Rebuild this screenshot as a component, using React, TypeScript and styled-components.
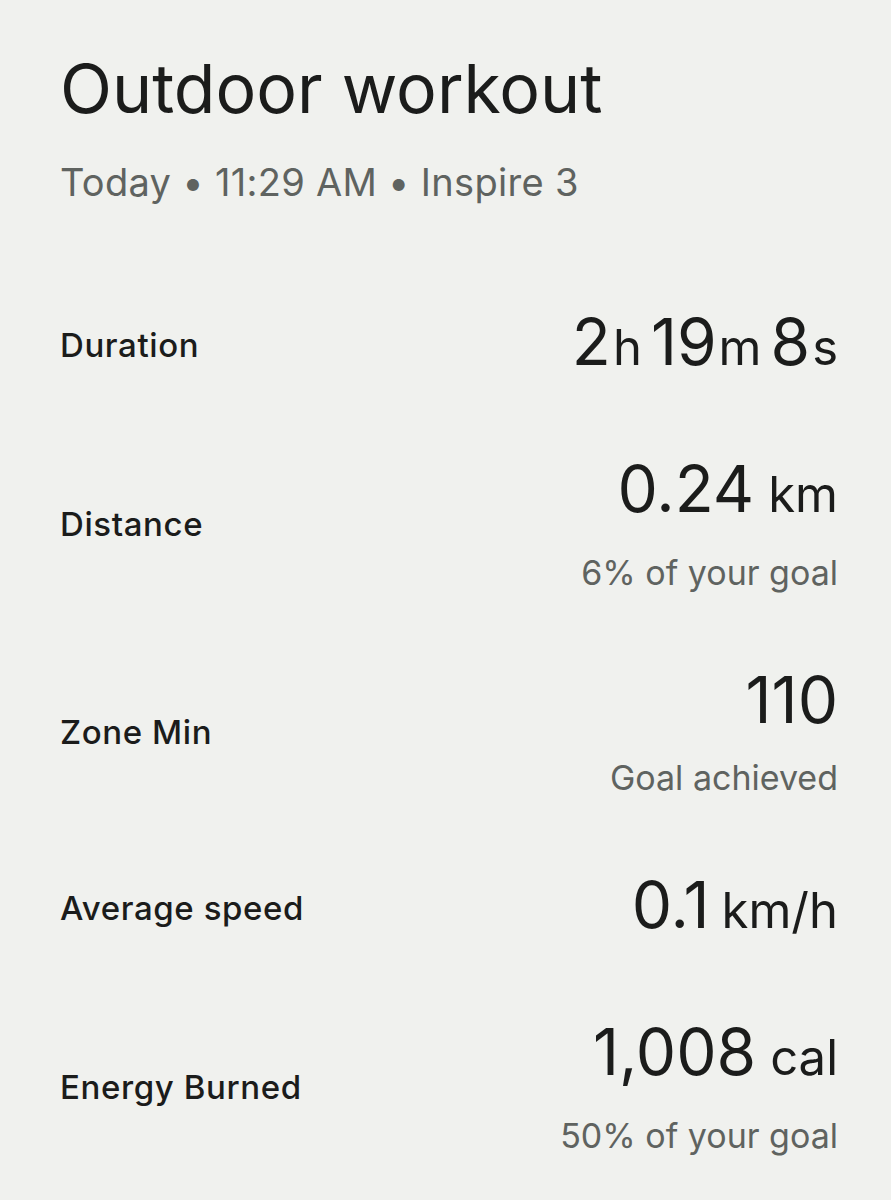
import React from "react";
import styled, { createGlobalStyle } from "styled-components";

const GlobalStyle = createGlobalStyle`
    html, body {
        margin: 0;
        padding: 0;
        background: #f0f1ee;
    }
    body {
        font-family: Inter, Roboto, "Noto Sans", "Liberation Sans", sans-serif;
        color: #1b1c1b;
    }
`;

const Page = styled.main`
    min-height: 1200px;
    box-sizing: border-box;
    padding: 46px 53px 0 60px;
    display: flex;
    flex-direction: column;
`;

const Title = styled.h1`
    margin: 0;
    font-size: 68px;
    line-height: 84px;
    font-weight: 400;
    letter-spacing: 0;
`;

const Subtitle = styled.div`
    margin-top: 28px;
    font-size: 38px;
    line-height: 48px;
    letter-spacing: 0.3px;
    color: #5f6360;
`;

const Stats = styled.section`
    margin-top: 100px;
    display: flex;
    flex-direction: column;
    gap: 69px;
`;

const Row = styled.div`
    display: flex;
    align-items: center;
    justify-content: space-between;
`;

const Label = styled.div`
    font-size: 33px;
    line-height: 40px;
    font-weight: 500;
    letter-spacing: 0.6px;
    color: #1b1c1b;
`;

const ValueBlock = styled.div`
    display: flex;
    flex-direction: column;
    align-items: flex-end;
`;

const Value = styled.div`
    font-size: 64px;
    line-height: 72px;
    white-space: nowrap;
`;

const Unit = styled.span<{ $gap?: number }>`
    font-size: 49px;
    margin-left: ${(p) => p.$gap ?? 2}px;
`;

const Group = styled.span`
    & + & {
        margin-left: 9px;
    }
`;

const Note = styled.div`
    margin-top: 20px;
    font-size: 34px;
    line-height: 44px;
    color: #5f6360;
`;

type Part = { num: string; unit?: string; gap?: number };

type Stat = {
    label: string;
    parts: Part[];
    note?: string;
};

const stats: Stat[] = [
    {
        label: "Duration",
        parts: [
            { num: "2", unit: "h" },
            { num: "19", unit: "m" },
            { num: "8", unit: "s" },
        ],
    },
    {
        label: "Distance",
        parts: [{ num: "0.24", unit: "km", gap: 14 }],
        note: "6% of your goal",
    },
    {
        label: "Zone Min",
        parts: [{ num: "110" }],
        note: "Goal achieved",
    },
    {
        label: "Average speed",
        parts: [{ num: "0.1", unit: "km/h", gap: 12 }],
    },
    {
        label: "Energy Burned",
        parts: [{ num: "1,008", unit: "cal", gap: 14 }],
        note: "50% of your goal",
    },
];

export default function App() {
    return (
        <>
            <GlobalStyle />
            <Page>
                <Title>Outdoor workout</Title>
                <Subtitle>Today • 11:29 AM • Inspire 3</Subtitle>
                <Stats>
                    {stats.map((s) => (
                        <Row key={s.label}>
                            <Label>{s.label}</Label>
                            <ValueBlock>
                                <Value>
                                    {s.parts.map((p, i) => (
                                        <Group key={i}>
                                            {p.num}
                                            {p.unit && <Unit $gap={p.gap}>{p.unit}</Unit>}
                                        </Group>
                                    ))}
                                </Value>
                                {s.note && <Note>{s.note}</Note>}
                            </ValueBlock>
                        </Row>
                    ))}
                </Stats>
            </Page>
        </>
    );
}
